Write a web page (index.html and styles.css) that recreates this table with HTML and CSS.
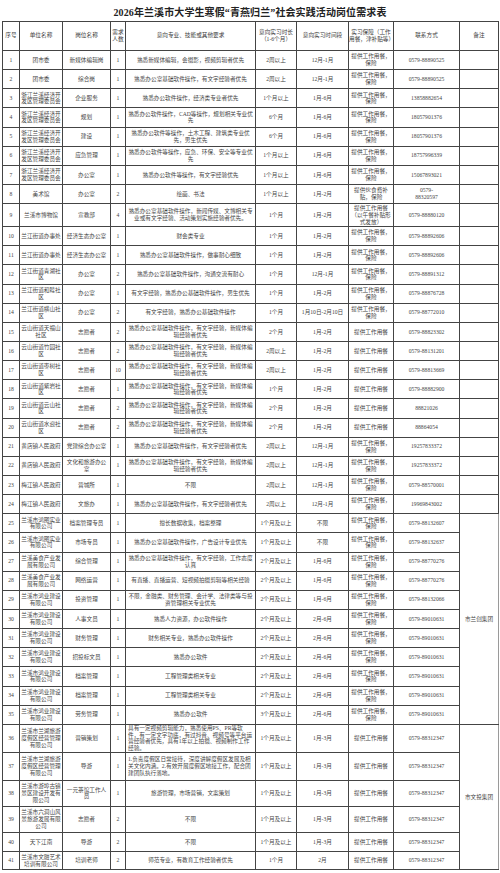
FILE: index.html
```html
<!DOCTYPE html>
<html lang="zh-CN">
<head>
<meta charset="utf-8">
<title>2026年兰溪市大学生寒假“青燕归兰”社会实践活动岗位需求表</title>
<link rel="stylesheet" href="styles.css">
</head>
<body>
<div class="page">
  <h1 class="title">2026年兰溪市大学生寒假“青燕归兰”社会实践活动岗位需求表</h1>
  <table class="grid">
    <colgroup>
      <col class="c1"><col class="c2"><col class="c3"><col class="c4"><col class="c5">
      <col class="c6"><col class="c7"><col class="c8"><col class="c9"><col class="c10">
    </colgroup>
    <thead>
      <tr class="head">
        <th>序号</th><th>单位名称</th><th>岗位名称</th><th>需求人数</th><th>意向专业、技能或其他要求</th>
        <th>意向实习时长（1-6个月）</th><th>意向实习时间段</th><th>实习保障（工作用餐，津补贴等）</th><th>联系方式</th><th>备注</th>
      </tr>
    </thead>
    <tbody>
      <tr><td>1</td><td>团市委</td><td>新媒体编辑岗</td><td>1</td><td>熟悉新媒体编辑，会摄影，视频剪辑者优先</td><td>2周以上</td><td>12月-1月</td><td>提供工作用餐，保险</td><td>0579-88890525</td><td></td></tr>
      <tr><td>2</td><td>团市委</td><td>综合岗</td><td>1</td><td>熟悉办公室基础软件操作，有文字经验者优先</td><td>2周以上</td><td>12月-1月</td><td>提供工作用餐，保险</td><td>0579-88890525</td><td></td></tr>
      <tr><td>3</td><td>浙江兰溪经济开发区管理委员会</td><td>企业服务</td><td>1</td><td>熟悉办公软件操作，经济类专业者优先</td><td>1个月以上</td><td>1月-6月</td><td>提供工作用餐，保险</td><td>13858882654</td><td></td></tr>
      <tr><td>4</td><td>浙江兰溪经济开发区管理委员会</td><td>规划</td><td>1</td><td>熟悉办公软件操作，CAD等操作，规划相关专业优先</td><td>6个月</td><td>1月-6月</td><td>提供工作用餐，保险</td><td>18057901376</td><td></td></tr>
      <tr><td>5</td><td>浙江兰溪经济开发区管理委员会</td><td>建设</td><td>1</td><td>熟悉办公软件等操作，土木工程、建筑类专业优先，男生优先</td><td>6个月</td><td>1月-6月</td><td>提供工作用餐，保险</td><td>18057901376</td><td></td></tr>
      <tr><td>6</td><td>浙江兰溪经济开发区管理委员会</td><td>应急管理</td><td>1</td><td>熟悉办公软件等操作，应急、环保、安全等专业优先</td><td>1个月以上</td><td>1月-6月</td><td>提供工作用餐，保险</td><td>18757996339</td><td></td></tr>
      <tr><td>7</td><td>浙江兰溪经济开发区管理委员会</td><td>办公室</td><td>1</td><td>熟悉办公软件等操作，有文字经验优先</td><td>1个月以上</td><td>1月-6月</td><td>提供工作用餐，保险</td><td>15067893021</td><td></td></tr>
      <tr><td>8</td><td>美术馆</td><td>办公室</td><td>2</td><td>绘画、书法</td><td>1个月以上</td><td>1月-2月</td><td>提供伙食费补贴，保险</td><td>0579-<br>88320597</td><td></td></tr>
      <tr class="tall9"><td>9</td><td>兰溪市博物馆</td><td>宣教部</td><td>4</td><td>熟悉办公室基础软件操作，新闻传媒、文博相关专业或有文字经验、活动策划实施经验者优先。</td><td>1个月</td><td>1月-2月</td><td>提供工作用餐（以午餐补贴形式发放）</td><td>0579-88880120</td><td></td></tr>
      <tr><td>10</td><td>兰江街道办事处</td><td>经济生态办公室</td><td>1</td><td>财会类专业</td><td>1个月</td><td>1月-2月</td><td>提供工作用餐，保险</td><td>0579-88892606</td><td></td></tr>
      <tr><td>11</td><td>兰江街道办事处</td><td>经济生态办公室</td><td>1</td><td>熟悉办公室基础软件操作，做事耐心细致</td><td>1个月</td><td>1月-2月</td><td>提供工作用餐，保险</td><td>0579-88892606</td><td></td></tr>
      <tr><td>12</td><td>兰江街道青湖社区</td><td>办公室</td><td>2</td><td>熟悉办公室基础软件操作，沟通交流有耐心</td><td>1个月</td><td>12月-1月</td><td>提供工作用餐，保险</td><td>0579-88891312</td><td></td></tr>
      <tr><td>13</td><td>兰江街道和睦社区</td><td>办公室</td><td>1</td><td>有文字经验，熟悉办公基础软件操作，男生优先</td><td>1个月</td><td>1月-2月</td><td>提供工作用餐，保险</td><td>0579-88876728</td><td></td></tr>
      <tr><td>14</td><td>兰江街道横山社区</td><td>办公室</td><td>2</td><td>有文字经验，熟悉办公基础软件操作</td><td>1个月</td><td>1月10日-2月10日</td><td>提供工作用餐，保险</td><td>0579-88772010</td><td></td></tr>
      <tr><td>15</td><td>云山街道天福山社区</td><td>志愿者</td><td>2</td><td>熟悉办公室基础软件操作，有文字经验，新媒体编辑经验者优先</td><td>2个月</td><td>1月-2月</td><td>提供工作用餐</td><td>0579-88823302</td><td></td></tr>
      <tr><td>16</td><td>云山街道竹园社区</td><td>志愿者</td><td>2</td><td>熟悉办公室基础软件操作，有文字经验，新媒体编辑经验者优先</td><td>2周以上</td><td>1月-2月</td><td>提供工作用餐</td><td>0579-88131201</td><td></td></tr>
      <tr><td>17</td><td>云山街道枣树社区</td><td>志愿者</td><td>10</td><td>熟悉办公室基础软件操作，有文字经验，新媒体编辑经验者优先</td><td>2周以上</td><td>1月-2月</td><td>提供工作用餐</td><td>0579-88813669</td><td></td></tr>
      <tr><td>18</td><td>云山街道紫岩社区</td><td>志愿者</td><td>1</td><td>熟悉办公室基础软件操作，有文字经验，新媒体编辑经验者优先</td><td>1个月</td><td>1月-2月</td><td>提供工作用餐</td><td>0579-88882900</td><td></td></tr>
      <tr><td>19</td><td>云山街道云山社区</td><td>志愿者</td><td>2</td><td>熟悉办公室基础软件操作，有文字经验，新媒体编辑经验者优先</td><td>2个月</td><td>1月-2月</td><td>提供工作用餐</td><td>88821026</td><td></td></tr>
      <tr><td>20</td><td>云山街道水迎社区</td><td>志愿者</td><td>2</td><td>熟悉办公室基础软件操作，有文字经验，新媒体编辑经验者优先</td><td>2个月</td><td>1月-2月</td><td>提供工作用餐</td><td>88864054</td><td></td></tr>
      <tr><td>21</td><td>黄店镇人民政府</td><td>党建综合办公室</td><td>1</td><td>熟悉办公室基础软件操作，有文字经验者优先</td><td>2周以上</td><td>12月-1月</td><td>提供工作用餐，保险</td><td>19257833372</td><td></td></tr>
      <tr><td>22</td><td>黄店镇人民政府</td><td>文化和旅游办公室</td><td>1</td><td>熟悉办公室基础软件操作，有文字经验，新媒体编辑经验者优先</td><td>2周以上</td><td>12月-1月</td><td>提供工作用餐，保险</td><td>19257833372</td><td></td></tr>
      <tr><td>23</td><td>梅江镇人民政府</td><td>营城所</td><td>1</td><td>不限</td><td>2周以上</td><td>12月-1月</td><td>提供工作用餐，保险</td><td>0579-88570001</td><td></td></tr>
      <tr><td>24</td><td>梅江镇人民政府</td><td>文旅办</td><td>1</td><td>熟悉办公室基础软件操作，有文字经验者优先</td><td>2周以上</td><td>12月-1月</td><td>提供工作用餐，保险</td><td>19969843002</td><td></td></tr>
      <tr><td>25</td><td>兰溪市鸿图实业有限公司</td><td>档案管理专员</td><td>1</td><td>擅长数据收集，档案整理</td><td>1个月及以上</td><td>不限</td><td>提供工作用餐，保险</td><td>0579-88132607</td><td class="note" rowspan="11">市兰创集团</td></tr>
      <tr><td>26</td><td>兰溪市鸿图实业有限公司</td><td>市场专员</td><td>1</td><td>熟悉办公室基础软件操作，广告设计专业优先</td><td>1个月及以上</td><td>不限</td><td>提供工作用餐，保险</td><td>0579-88132637</td></tr>
      <tr><td>27</td><td>兰溪美食产业发展有限公司</td><td>综合管理</td><td>1</td><td>熟悉办公室基础软件操作，有文字经验，工作态度认真</td><td>2个月及以上</td><td>1月-6月</td><td>提供工作用餐，保险</td><td>0579-88770276</td></tr>
      <tr><td>28</td><td>兰溪美食产业发展有限公司</td><td>网络运营</td><td>1</td><td>有直播、直播运营、短视频拍摄剪辑等相关经验</td><td>2个月及以上</td><td>1月-6月</td><td>提供工作用餐，保险</td><td>0579-88770276</td></tr>
      <tr><td>29</td><td>兰溪市鸿业建设有限公司</td><td>投资管理</td><td>1</td><td>不限，金融类、财务管理、会计学、法律类等与投资管理相关专业优先</td><td>2个月及以上</td><td>1月-6月</td><td>提供工作用餐，保险</td><td>0579-88132066</td></tr>
      <tr><td>30</td><td>兰溪市鸿业建设有限公司</td><td>人事文员</td><td>1</td><td>熟悉人力资源，办公软件操作</td><td>2个月及以上</td><td>2月-6月</td><td>提供工作用餐，保险</td><td>0579-89010631</td></tr>
      <tr><td>31</td><td>兰溪市鸿业建设有限公司</td><td>财务管理</td><td>1</td><td>财务相关专业，熟悉办公软件操作</td><td>2个月及以上</td><td>2月-6月</td><td>提供工作用餐，保险</td><td>0579-89010631</td></tr>
      <tr><td>32</td><td>兰溪市鸿业建设有限公司</td><td>招投标文员</td><td>1</td><td>熟悉办公软件</td><td>2个月及以上</td><td>2月-6月</td><td>提供工作用餐，保险</td><td>0579-89010631</td></tr>
      <tr><td>33</td><td>兰溪市鸿业建设有限公司</td><td>档案管理</td><td>1</td><td>工程管理类相关专业</td><td>2个月及以上</td><td>2月-6月</td><td>提供工作用餐，保险</td><td>0579-89010631</td></tr>
      <tr><td>34</td><td>兰溪市鸿业建设有限公司</td><td>档案管理</td><td>1</td><td>工程管理类相关专业</td><td>2个月及以上</td><td>2月-6月</td><td>提供工作用餐，保险</td><td>0579-89010631</td></tr>
      <tr><td>35</td><td>兰溪市鸿业建设有限公司</td><td>劳务管理</td><td>1</td><td>熟悉办公软件</td><td>3个月及以上</td><td>2月-6月</td><td>提供工作用餐，保险</td><td>0579-89010631</td></tr>
      <tr class="tall27"><td>36</td><td>兰溪市兰湖旅游度假区经营管理有限公司</td><td>营销策划</td><td>1</td><td class="left">具有一定视频剪辑能力，熟悉使用PS、PR等软件，有一定文字功底，有过抖音、视频号等平台运营经验者优先，具有1年以上拍摄、视频制作工作经验。</td><td>1个月及以上</td><td>1月-3月</td><td>提供工作用餐</td><td>0579-88312347</td><td class="note" rowspan="6">市文投集团</td></tr>
      <tr class="tall28"><td>37</td><td>兰溪市兰湖旅游度假区经营管理有限公司</td><td>导游</td><td>1</td><td class="left">1.负责度假区日常接待，深度讲解度假区发展及相关文化内涵。2.有效开展度假区地接工作，配合团建团队执行落地。</td><td>1个月及以上</td><td>1月-3月</td><td>提供工作用餐</td><td>0579-88312347</td></tr>
      <tr class="tall26"><td>38</td><td>兰溪市游埠古镇景区建设开发有限公司</td><td>一元茶馆工作人员</td><td>1</td><td>旅游管理，市场营销，文案策划</td><td>1个月及以上</td><td>1月-3月</td><td>提供工作用餐</td><td>0579-88312347</td></tr>
      <tr class="tall26"><td>39</td><td>兰溪市六洞山风景旅游发展有限公司</td><td>志愿者</td><td>2</td><td>不限</td><td>1个月及以上</td><td>1月-3月</td><td>提供工作用餐</td><td>0579-88312347</td></tr>
      <tr><td>40</td><td>天下江南</td><td>导游</td><td>2</td><td>不限</td><td>1个月及以上</td><td>1月-3月</td><td>提供工作用餐</td><td>0579-88312347</td></tr>
      <tr class="last"><td>41</td><td>兰溪市文融艺术培训有限公司</td><td>培训老师</td><td>2</td><td>师范专业，有教育工作经验者优先</td><td>1个月</td><td>2月</td><td>提供工作用餐</td><td>0579-88312347</td></tr>
    </tbody>
  </table>
</div>
</body>
</html>
```
FILE: styles.css
```css
html, body {
  margin: 0;
  padding: 0;
  background: #ffffff;
}

.page {
  width: 500px;
  font-family: "Liberation Serif", "Noto Sans CJK SC", serif;
  color: #454545;
}

.title {
  margin: 0;
  height: 21px;
  display: flex;
  align-items: center;
  justify-content: center;
  padding-top: 2px;
  box-sizing: border-box;
  font-family: "Liberation Serif", "Noto Sans CJK SC", serif;
  font-size: 10px;
  font-weight: 700;
  color: #222222;
  letter-spacing: 0.1px;
}

.grid {
  margin-left: 2px;
  width: 496px;
  table-layout: fixed;
  border-collapse: collapse;
  border: 1px solid #3d3d3d;
}

.c1 { width: 17px; }
.c2 { width: 43px; }
.c3 { width: 48px; }
.c4 { width: 15px; }
.c5 { width: 130px; }
.c6 { width: 41px; }
.c7 { width: 52px; }
.c8 { width: 45px; }
.c9 { width: 66px; }
.c10 { width: 39px; }

.grid th,
.grid td {
  border: 1px solid #444444;
  padding: 0;
  font-size: 5.65px;
  line-height: 6.8px;
  font-weight: 400;
  text-align: center;
  vertical-align: middle;
  word-break: break-all;
  overflow: hidden;
}

.grid th:nth-child(5),
.grid td:nth-child(5) {
  padding: 0 2px;
}

.grid th:nth-child(3),
.grid td:nth-child(3) {
  padding: 0 1.5px;
}

.grid td.left {
  text-align: left;
}

.grid .head {
  height: 29px;
}

.grid .head th {
  line-height: 7.4px;
  color: #3c3c3c;
}

.grid tbody tr {
  height: 19.15px;
}

.grid tbody tr.tall9 {
  height: 23px;
}

.grid tbody tr.tall27 {
  height: 27px;
}

.grid tbody tr.tall28 {
  height: 28px;
}

.grid tbody tr.tall26 {
  height: 26px;
}

.grid tbody tr.last {
  height: 18px;
}

.grid td.note {
  border-right-color: #9a9a9a;
}
```
